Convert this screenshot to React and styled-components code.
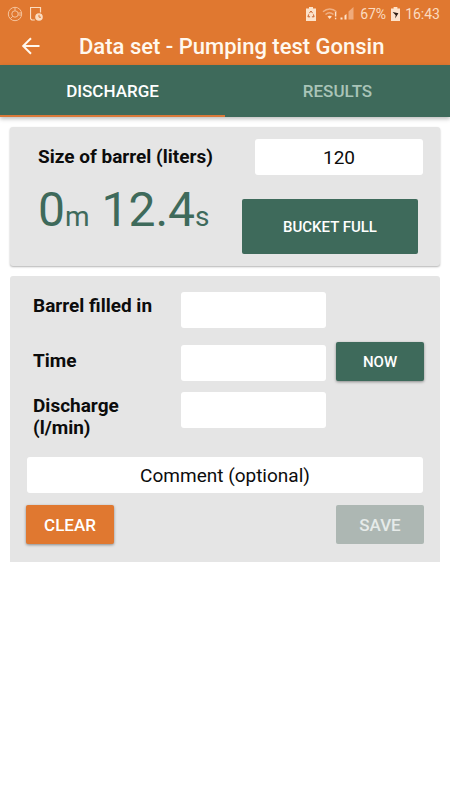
import React, { useState } from "react";
import styled, { createGlobalStyle } from "styled-components";

const GlobalStyle = createGlobalStyle`
  * {
    box-sizing: border-box;
  }

  body {
    margin: 0;
    background-color: #ffffff;
    color: #0c0c0c;
    font-family: Roboto, "Liberation Sans", sans-serif;
  }

  button,
  input {
    font-family: inherit;
  }
`;

// status bar
const StatusBar = styled.div`
  display: flex;
  justify-content: space-between;
  align-items: center;
  height: 27px;
  padding: 0 10px 0 7px;
  background-color: #e07830;
  color: #fbdcc0;
  font-size: 14px;
`;

const StatusGroup = styled.div`
  display: flex;
  align-items: center;
  gap: ${(props) => props.$gap};

  svg {
    display: block;
  }
`;

// toolbar
const Toolbar = styled.header`
  display: flex;
  align-items: center;
  gap: 37px;
  height: 38px;
  padding: 0 20px;
  background-color: #e07830;
`;

const BackButton = styled.button`
  display: flex;
  padding: 0;
  border: none;
  background: none;
  cursor: pointer;
`;

const Title = styled.h1`
  margin: 0;
  padding-top: 2px;
  color: #fff8ee;
  font-size: 22px;
  line-height: 36px;
  font-weight: 500;
  white-space: nowrap;
`;

const Tabs = styled.nav`
  display: flex;
  background-color: #3e6a5b;
  box-shadow: 0 2px 4px rgba(0, 0, 0, 0.25);
`;

const Tab = styled.button`
  flex: 1;
  height: 52px;
  padding: 2px 0 0;
  border: none;
  border-bottom: 2px solid ${(props) => (props.$active ? "#d9793a" : "#3e6a5b")};
  background: none;
  color: ${(props) => (props.$active ? "#ffffff" : "#a9c4b8")};
  font-size: 17px;
  font-weight: 500;
  cursor: pointer;
`;

const Content = styled.main`
  display: flex;
  flex-direction: column;
  gap: 10px;
  padding: 10px;
`;

const TimerCard = styled.section`
  display: flex;
  flex-direction: column;
  gap: 24px;
  padding: 12px 17px 12px 28px;
  border-radius: 3px;
  background-color: #e5e5e5;
  box-shadow: 0 1px 2px rgba(0, 0, 0, 0.3);
`;

const SizeRow = styled.div`
  display: flex;
  justify-content: space-between;
  align-items: center;
`;

const TimerRow = styled.div`
  display: flex;
  justify-content: space-between;
  padding-right: 5px;
`;

const Label = styled.label`
  font-size: 19px;
  line-height: 22px;
  font-weight: 700;
`;

const TextBox = styled.input`
  width: ${(props) => props.$width || "100%"};
  min-width: 0;
  height: 36px;
  padding: 0 8px;
  border: none;
  border-radius: 3px;
  background-color: #ffffff;
  color: #0c0c0c;
  font-size: 19px;
  text-align: center;

  &::placeholder {
    color: #0c0c0c;
    opacity: 1;
  }
`;

const Timer = styled.div`
  color: #3e6a5b;
  font-size: 48px;
  line-height: 22px;
  white-space: nowrap;
`;

const Unit = styled.span`
  font-size: 28px;
`;

const Button = styled.button`
  width: ${(props) => props.$width || "88px"};
  height: ${(props) => props.$height || "39px"};
  padding: 0;
  border: none;
  border-radius: 2px;
  background-color: ${(props) => props.$color || "#3e6a5b"};
  color: #ffffff;
  font-size: ${(props) => props.$size || "15px"};
  font-weight: 500;
  box-shadow: ${(props) => (props.$flat ? "none" : "0 1px 3px rgba(0, 0, 0, 0.4)")};
  cursor: pointer;

  &:disabled {
    background-color: #adb7b3;
    color: #e6ebe9;
    box-shadow: none;
  }
`;

const ResultCard = styled.form`
  display: flex;
  flex-direction: column;
  gap: 12px;
  padding: 16px 16px 18px;
  border-radius: 3px 3px 0 0;
  background-color: #e5e5e5;
`;

const Fields = styled.div`
  display: grid;
  grid-template-columns: 1fr 1fr 88px;
  column-gap: 10px;
  padding-bottom: 3px;

  ${Label} {
    padding: 3px 0 3px 7px;
  }
`;

const Field = styled.div`
  display: grid;
  grid-column: 1 / -1;
  grid-template-columns: subgrid;
  align-items: start;
  min-height: ${(props) => props.$height};
`;

const TimeField = styled(Field)`
  align-items: end;
  margin-bottom: 11px;

  ${Label} {
    align-self: center;
  }
`;

const CommentRow = styled.div`
  padding: 0 1px;
`;

const Actions = styled.div`
  display: flex;
  justify-content: space-between;
`;

const App = () => {
  const [tab, setTab] = useState("discharge");
  const [size, setSize] = useState("120");

  return (
    <>
      <GlobalStyle />
      <StatusBar>
        <StatusGroup $gap="7px">
          <svg width="16" height="16" viewBox="0 0 16 16" fill="none" stroke="#f5c39c">
            <circle cx="8" cy="8" r="6.7" />
            <circle cx="8" cy="8" r="3.2" />
            <path d="M8 1.3v3.5M11.2 7h3.4M11.2 9h3.4M5.7 10.3l-2.4 2.4" />
          </svg>
          <svg width="13" height="14" viewBox="0 0 13 14" fill="none" stroke="#fbdcc0">
            <path d="M10.5 5.5v-5h-10v11.2l1.3 1.3h3" strokeWidth="1.2" />
            <circle cx="9" cy="10" r="3.8" fill="#fbdcc0" stroke="none" />
            <path d="M9 7.8v2.4h2" stroke="#e07830" />
          </svg>
        </StatusGroup>
        <StatusGroup $gap="5px">
          <svg width="10" height="14" viewBox="0 0 10 14" fill="none">
            <path d="M3 0h4v1.6h3V14H0V1.6h3z" fill="#fde3cb" />
            <path d="M3.4 6.2L5 4l1.6 2.2M7.4 7.4l.7 2.4H5.9M4.1 9.8H1.9l.8-2.4" stroke="#c8622a" />
          </svg>
          <svg width="34" height="14" viewBox="0 0 34 14" fill="none">
            <path d="M2 4.8c4-3.8 9.500-3.800 13.500 0M4.500 7.500c2.500-2.300 5.500-2.300 8 0" stroke="#f0b083" strokeWidth="1.4" />
            <path d="M6.5 9.500q2.300-1.500 4.400 0l-2.200 2.500z" fill="#fde3cb" />
            <path d="M14.6 5v4.600M14.600 10.800v1.500" stroke="#fde3cb" strokeWidth="1.4" />
            <path d="M19.5 12.500v-2h2v2zM23.500 12.500V8.500l2-1.500v5.500z" fill="#fde3cb" />
            <path d="M27.500 12.500v-8L32.500 0v12.500z" fill="#efaa7b" />
          </svg>
          <span>67%</span>
          <svg width="9" height="14" viewBox="0 0 9 14">
            <path d="M2.6 0h3.800v1.500H9V14H0V1.500h2.600z" fill="#fde3cb" />
            <path d="M1.6 5l5.800 1.200-3.300 5.300.6-3.300z" fill="#2c1c12" />
          </svg>
          <span>16:43</span>
        </StatusGroup>
      </StatusBar>
      <Toolbar>
        <BackButton type="button" aria-label="Back">
          <svg width="22" height="18" viewBox="0 0 22 18" fill="none" stroke="#fff8ee" strokeWidth="2">
            <path d="M19.5 9H3.5M11 1.2L3.2 9l7.8 7.8" />
          </svg>
        </BackButton>
        <Title>Data set - Pumping test Gonsin</Title>
      </Toolbar>
      <Tabs>
        <Tab type="button" $active={tab === "discharge"} onClick={() => setTab("discharge")}>
          DISCHARGE
        </Tab>
        <Tab type="button" $active={tab === "results"} onClick={() => setTab("results")}>
          RESULTS
        </Tab>
      </Tabs>

      <Content>
        <TimerCard>
          <SizeRow>
            <Label htmlFor="size">Size of barrel (liters)</Label>
            <TextBox
              id="size"
              $width="168px"
              value={size}
              onChange={(e) => setSize(e.target.value)}
            />
          </SizeRow>
          <TimerRow>
            <Timer>
              0<Unit>m</Unit> 12.4<Unit>s</Unit>
            </Timer>
            <Button type="button" $width="176px" $height="55px" $flat>
              BUCKET FULL
            </Button>
          </TimerRow>
        </TimerCard>

        <ResultCard onSubmit={(e) => e.preventDefault()}>
          <Fields>
            <Field $height="49px">
              <Label htmlFor="filled">Barrel filled in</Label>
              <TextBox id="filled" />
            </Field>
            <TimeField $height="40px">
              <Label htmlFor="time">Time</Label>
              <TextBox id="time" />
              <Button type="button">NOW</Button>
            </TimeField>
            <Field>
              <Label htmlFor="discharge">
                Discharge
                <br />
                (l/min)
              </Label>
              <TextBox id="discharge" />
            </Field>
          </Fields>
          <CommentRow>
            <TextBox aria-label="Comment" placeholder="Comment (optional)" />
          </CommentRow>
          <Actions>
            <Button type="reset" $color="#e07830" $size="17px">
              CLEAR
            </Button>
            <Button type="submit" $size="17px" disabled>
              SAVE
            </Button>
          </Actions>
        </ResultCard>
      </Content>
    </>
  );
};

export default App;
